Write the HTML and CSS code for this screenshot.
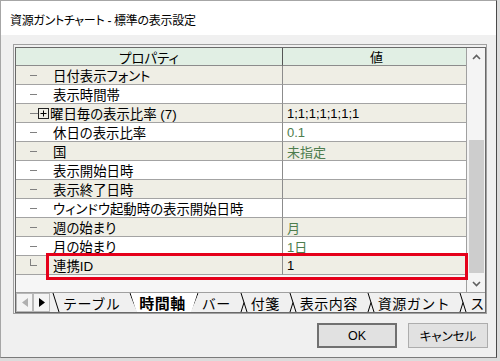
FILE: index.html
```html
<!DOCTYPE html>
<html lang="ja">
<head>
    <meta charset="UTF-8">
    <title>資源ガントチャート - 標準の表示設定</title>
    <link rel="stylesheet" href="styles.css">
</head>
<body>

<div class="window">
    <div class="titlebar">資源ガントチャート - 標準の表示設定</div>

    <div class="content">
        <div class="frame">
            <div class="inner">
                <div class="grid">
                    <div class="sheet">
                        <div class="row head">
                            <div class="cell name">プロパティ</div>
                            <div class="cell val">値</div>
                        </div>
                        <div class="row alt">
                            <div class="cell name"><span class="twig"></span>日付表示フォント</div>
                            <div class="cell val"></div>
                        </div>
                        <div class="row">
                            <div class="cell name"><span class="twig"></span>表示時間帯</div>
                            <div class="cell val"></div>
                        </div>
                        <div class="row alt">
                            <div class="cell name">
                                <span class="twig short"></span>
                                <svg class="expander" width="11" height="11" viewBox="0 0 11 11">
                                    <rect x="0.5" y="0.5" width="10" height="10" fill="none" stroke="#222"/>
                                    <line x1="2.5" y1="5.5" x2="8.5" y2="5.5" stroke="#000"/>
                                    <line x1="5.5" y1="2.5" x2="5.5" y2="8.5" stroke="#000"/>
                                </svg>
                                <span class="label">曜日毎の表示比率 (7)</span>
                            </div>
                            <div class="cell val">1;1;1;1;1;1;1</div>
                        </div>
                        <div class="row">
                            <div class="cell name"><span class="twig"></span>休日の表示比率</div>
                            <div class="cell val green">0.1</div>
                        </div>
                        <div class="row alt">
                            <div class="cell name"><span class="twig"></span>国</div>
                            <div class="cell val green">未指定</div>
                        </div>
                        <div class="row">
                            <div class="cell name"><span class="twig"></span>表示開始日時</div>
                            <div class="cell val"></div>
                        </div>
                        <div class="row alt">
                            <div class="cell name"><span class="twig"></span>表示終了日時</div>
                            <div class="cell val"></div>
                        </div>
                        <div class="row">
                            <div class="cell name"><span class="twig"></span>ウィンドウ起動時の表示開始日時</div>
                            <div class="cell val"></div>
                        </div>
                        <div class="row alt">
                            <div class="cell name"><span class="twig"></span>週の始まり</div>
                            <div class="cell val green">月</div>
                        </div>
                        <div class="row">
                            <div class="cell name"><span class="twig"></span>月の始まり</div>
                            <div class="cell val green">1日</div>
                        </div>
                        <div class="row alt">
                            <div class="cell name"><span class="twig last"></span>連携ID</div>
                            <div class="cell val">1</div>
                        </div>
                    </div>

                    <div class="scrollbar">
                        <div class="arrow">
                            <svg width="9" height="6" viewBox="0 0 9 6"><polyline points="1,5 4.5,1.5 8,5" fill="none" stroke="#606060" stroke-width="1.6"/></svg>
                        </div>
                        <div class="track"><div class="thumb"></div></div>
                        <div class="arrow">
                            <svg width="9" height="6" viewBox="0 0 9 6"><polyline points="1,1 4.5,4.5 8,1" fill="none" stroke="#606060" stroke-width="1.6"/></svg>
                        </div>
                    </div>
                </div>

                <div class="tabs">
                    <span class="nav">
                        <svg width="6" height="9" viewBox="0 0 6 9"><polygon points="6,0 0,4.5 6,9" fill="#b0b0b0"/></svg>
                    </span>
                    <span class="nav">
                        <svg width="6" height="9" viewBox="0 0 6 9"><polygon points="0,0 6,4.5 0,9" fill="#000"/></svg>
                    </span>
                    <svg class="sep first" width="8" height="19" viewBox="0 0 8 19"><line x1="1" y1="0" x2="7" y2="19"/></svg>
                    <span class="tab">テーブル</span>
                    <span class="tab-on">
                        <svg class="sep" width="8" height="19" viewBox="0 0 8 19"><line x1="1" y1="0" x2="7" y2="19"/><line x1="4" y1="9.5" x2="1" y2="19"/></svg>
                        <span class="tab">時間軸</span>
                        <svg class="sep" width="8" height="19" viewBox="0 0 8 19"><line x1="7" y1="0" x2="1" y2="19"/><line x1="4" y1="9.5" x2="7" y2="19"/></svg>
                    </span>
                    <span class="tab">バー</span>
                    <svg class="sep" width="8" height="19" viewBox="0 0 8 19"><line x1="1" y1="0" x2="7" y2="19"/><line x1="4" y1="9.5" x2="1" y2="19"/></svg>
                    <span class="tab">付箋</span>
                    <svg class="sep" width="8" height="19" viewBox="0 0 8 19"><line x1="1" y1="0" x2="7" y2="19"/><line x1="4" y1="9.5" x2="1" y2="19"/></svg>
                    <span class="tab">表示内容</span>
                    <svg class="sep" width="8" height="19" viewBox="0 0 8 19"><line x1="1" y1="0" x2="7" y2="19"/><line x1="4" y1="9.5" x2="1" y2="19"/></svg>
                    <span class="tab">資源ガント</span>
                    <svg class="sep" width="8" height="19" viewBox="0 0 8 19"><line x1="1" y1="0" x2="7" y2="19"/><line x1="4" y1="9.5" x2="1" y2="19"/></svg>
                    <span class="tab last">ス</span>
                </div>
            </div>

            <!-- annotation around the highlighted row -->
            <div class="mark"></div>
        </div>

        <div class="buttons">
            <button type="button" class="btn default">OK</button>
            <button type="button" class="btn">キャンセル</button>
        </div>
    </div>
</div>

</body>
</html>
```

FILE: styles.css
```css
/* dialog: 資源ガントチャート - 標準の表示設定 */
body {
    margin: 0;
    background-color: #dcdcdc;
    font-family: "Liberation Sans", "Noto Sans CJK JP", sans-serif;
    font-feature-settings: "palt";
}
.window {
    width: 497px;
    height: 358px;
    box-sizing: border-box;
    border: 1px solid #a6a6a6;
    border-right-color: #4a4a4a;
    border-bottom-color: #7a7a7a;
    background-color: #f0f0f0;
}
.titlebar {
    height: 34px;
    background-color: #fff;
    display: flex;
    align-items: center;
    padding: 2px 0 0 9px;
    box-sizing: border-box;
    font-size: 12px;
    letter-spacing: -0.3px;
    color: #000;
}
.content {
    padding: 9px 9px 0 12px;
}
.frame {
    position: relative;
    border: 1px solid #a0a0a0;
    padding: 2px 0 0 1px;
}
.inner {
    border: 1px solid #696969;
}
.grid {
    display: flex;
    height: 244px;
}
.sheet {
    flex: 1;
    background-color: #f6f6f6;
}
.row {
    display: grid;
    grid-template-columns: 267px 1fr;
    height: 19px;
    background-color: #fff;
}
.row.alt {
    background-color: #efeee5;
}
.row.head {
    height: 18px;
    background-color: #e1efe4;
}
.cell {
    display: flex;
    align-items: center;
    box-sizing: border-box;
    border-bottom: 1px solid #a3a3a3;
    font-size: 13.4px;
    white-space: nowrap;
    overflow: hidden;
}
.cell.name {
    border-right: 1px solid #8c8c8c;
}
.head .cell {
    justify-content: center;
    border-bottom-color: #8c8c8c;
}
.head .cell.name {
    border-right-color: #555;
}
.cell.val {
    padding-left: 4px;
    font-size: 13px;
}
.cell.green {
    color: #4d7d4d;
}
.twig {
    width: 7px;
    height: 1px;
    margin: 0 16px 0 14px;
    background-color: #808080;
    flex: none;
}
.twig.short {
    width: 8px;
    margin-right: 0;
}
.twig.last {
    height: 6px;
    width: 6px;
    background: none;
    border-left: 1px solid #808080;
    border-bottom: 1px solid #808080;
    margin-top: -6px;
}
.expander {
    flex: none;
    margin-right: 1px;
}
.scrollbar {
    width: 18px;
    border-left: 1px solid #a0a0a0;
    background-color: #f4f4f4;
    display: flex;
    flex-direction: column;
}
.arrow {
    height: 17px;
    display: flex;
    align-items: center;
    justify-content: center;
}
.track {
    flex: 1;
    padding: 75px 0 0 2px;
}
.thumb {
    width: 15px;
    height: 133px;
    background-color: #cdcdcd;
}
.tabs {
    display: flex;
    height: 19px;
    border-top: 1px solid #a0a0a0;
    background-color: #f0f0f0;
    overflow: hidden;
    font-family: "Noto Sans CJK JP", sans-serif;
    font-feature-settings: normal;
    font-size: 14px;
    letter-spacing: 0.5px;
    white-space: nowrap;
}
.nav {
    width: 17px;
    box-sizing: border-box;
    border: 1px solid #b8b8b8;
    background-color: #f4f4f4;
    display: flex;
    align-items: center;
    justify-content: center;
    flex: none;
}
.sep {
    flex: none;
    stroke: #000;
    stroke-width: 1;
}
.sep.first {
    margin-left: 2px;
}
.tab {
    display: flex;
    align-items: center;
    padding: 0 9px 0 3px;
    line-height: 1;
}
.tab.last {
    padding-right: 0;
}
.tab-on {
    display: flex;
    background-color: #fff;
    clip-path: polygon(0 0, 100% 0, calc(100% - 8px) 100%, 8px 100%);
}
.tab-on .tab {
    font-weight: bold;
    font-size: 15px;
    padding: 0 5px 0 2px;
}
.mark {
    position: absolute;
    left: 32px;
    top: 208px;
    width: 422px;
    height: 27px;
    box-sizing: border-box;
    border: 3px solid #e5001a;
}
.buttons {
    display: flex;
    justify-content: flex-end;
    gap: 11px;
    margin: 9px -1px 0 0;
}
.btn {
    width: 80px;
    height: 25px;
    box-sizing: border-box;
    border: 1px solid #adadad;
    background-color: #e1e1e1;
    font-family: "Liberation Sans", "Noto Sans CJK JP", sans-serif;
    font-feature-settings: "palt";
    font-size: 12.5px;
    color: #000;
    padding: 0;
}
.btn.default {
    border: 2px solid #707070;
}
```
